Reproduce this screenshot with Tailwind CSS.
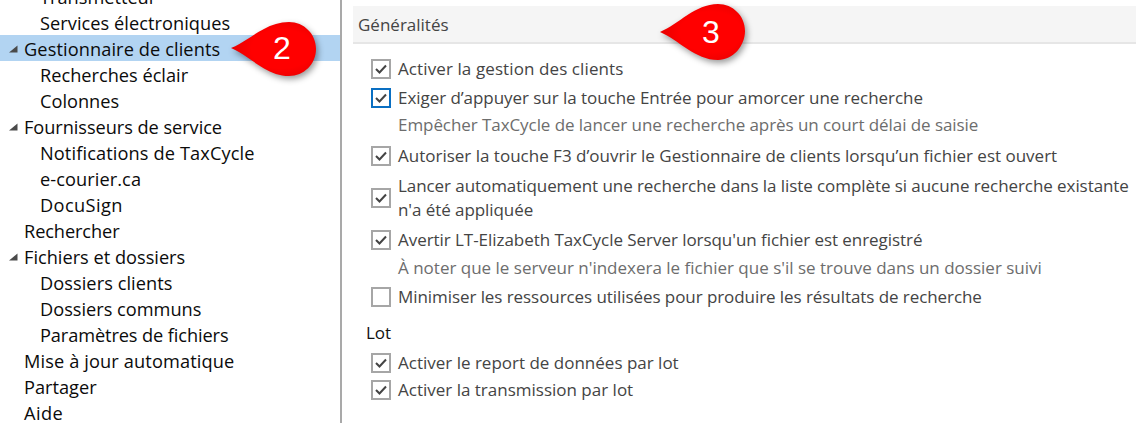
<!DOCTYPE html>
<html lang="fr">
<head>
    <meta charset="UTF-8">
    <title>Options</title>
    <script src="https://cdn.jsdelivr.net/npm/@tailwindcss/browser@4"></script>
</head>
<body class="bg-white">
    <div class="relative flex w-[1136px] h-[423px] overflow-hidden font-['Open_Sans','Noto_Sans',sans-serif] text-[17px] leading-[26px]">
        <!-- Tree -->
        <div class="w-[342px] h-[440px] shrink-0 border-r-2 border-[#a9a9a9] -mt-[17px] text-[#0b0b0b] text-[18.2px]">
            <div class="h-[26px] pl-[40px] pt-[1px]">Transmetteur</div>
            <div class="h-[26px] pl-[40px] pt-[1px] tracking-[0.05px]">Services électroniques</div>
            <div class="h-[26px] pl-[8px] flex items-center bg-[#b2d4f2]">
                <svg class="w-[11px] h-[11px] mr-[5px]" viewBox="0 0 11 11"><path d="M9.5 2.5V9.5H1Z" fill="#4a4a4a"/></svg>
                <span class="pt-[1px] tracking-[0.1px]">Gestionnaire de clients</span>
            </div>
            <div class="h-[26px] pl-[40px] pt-[1px]">Recherches éclair</div>
            <div class="h-[26px] pl-[40px] pt-[1px]">Colonnes</div>
            <div class="h-[26px] pl-[8px] flex items-center">
                <svg class="w-[11px] h-[11px] mr-[5px]" viewBox="0 0 11 11"><path d="M9.5 2.5V9.5H1Z" fill="#4a4a4a"/></svg>
                <span class="pt-[1px] tracking-[-0.05px]">Fournisseurs de service</span>
            </div>
            <div class="h-[26px] pl-[40px] pt-[1px] tracking-[0.12px]">Notifications de TaxCycle</div>
            <div class="h-[26px] pl-[40px] pt-[1px] tracking-[0.08px]">e-courier.ca</div>
            <div class="h-[26px] pl-[40px] pt-[1px] tracking-[0.4px]">DocuSign</div>
            <div class="h-[26px] pl-[24px] pt-[1px] tracking-[-0.1px]">Rechercher</div>
            <div class="h-[26px] pl-[8px] flex items-center">
                <svg class="w-[11px] h-[11px] mr-[5px]" viewBox="0 0 11 11"><path d="M9.5 2.5V9.5H1Z" fill="#4a4a4a"/></svg>
                <span class="pt-[1px]">Fichiers et dossiers</span>
            </div>
            <div class="h-[26px] pl-[40px] pt-[1px] tracking-[0.06px]">Dossiers clients</div>
            <div class="h-[26px] pl-[40px] pt-[1px]">Dossiers communs</div>
            <div class="h-[26px] pl-[40px] pt-[1px] tracking-[-0.1px]">Paramètres de fichiers</div>
            <div class="h-[26px] pl-[24px] pt-[1px] tracking-[0.13px]">Mise à jour automatique</div>
            <div class="h-[26px] pl-[24px] pt-[1px]">Partager</div>
            <div class="h-[26px] pl-[24px] pt-[1px] tracking-[0.4px]">Aide</div>
        </div>

        <!-- Settings -->
        <div class="flex-1 pl-[11px] pt-[6px] text-[#444]">
            <div class="h-[38px] pl-[5px] pt-[1px] flex items-center bg-[#f5f5f5] border-b-2 border-[#e6e6e6] text-[#444]">Généralités</div>

            <div class="pl-[18px] pt-[11px]">
                <label class="flex items-center h-[27px]">
                    <span class="w-[20px] h-[20px] mr-[7px] shrink-0 border-2 border-[#a6a6a6] flex items-center justify-center">
                        <svg class="w-[14px] h-[14px]" viewBox="0 0 14 14"><path d="M2 7L5.5 10.5L12 3.5" fill="none" stroke="#444" stroke-width="2"/></svg>
                    </span>
                    <span class="tracking-[0.1px]">Activer la gestion des clients</span>
                </label>
                <label class="flex items-center h-[31px] pt-[1px]">
                    <span class="w-[20px] h-[20px] mr-[7px] shrink-0 border-2 border-[#0a6fc2] flex items-center justify-center">
                        <svg class="w-[14px] h-[14px]" viewBox="0 0 14 14"><path d="M2 7L5.5 10.5L12 3.5" fill="none" stroke="#444" stroke-width="2"/></svg>
                    </span>
                    <span class="tracking-[-0.05px]">Exiger d’appuyer sur la touche Entrée pour amorcer une recherche</span>
                </label>
                <div class="pl-[27px] h-[26px] -mt-[1px] text-[#6d6d6d] tracking-[-0.07px]">Empêcher TaxCycle de lancer une recherche après un court délai de saisie</div>
                <label class="flex items-center h-[31px] mt-[2px]">
                    <span class="w-[20px] h-[20px] mr-[7px] shrink-0 border-2 border-[#a6a6a6] flex items-center justify-center">
                        <svg class="w-[14px] h-[14px]" viewBox="0 0 14 14"><path d="M2 7L5.5 10.5L12 3.5" fill="none" stroke="#444" stroke-width="2"/></svg>
                    </span>
                    Autoriser la touche F3 d’ouvrir le Gestionnaire de clients lorsqu’un fichier est ouvert
                </label>
                <label class="flex items-center h-[52px] mt-[1px]">
                    <span class="w-[20px] h-[20px] mr-[7px] shrink-0 border-2 border-[#a6a6a6] flex items-center justify-center">
                        <svg class="w-[14px] h-[14px]" viewBox="0 0 14 14"><path d="M2 7L5.5 10.5L12 3.5" fill="none" stroke="#444" stroke-width="2"/></svg>
                    </span>
                    <span class="leading-[24px] tracking-[-0.07px] whitespace-nowrap">Lancer automatiquement une recherche dans la liste complète si aucune recherche existante<br>n'a été appliquée</span>
                </label>
                <label class="flex items-center h-[30px] mt-[1px]">
                    <span class="w-[20px] h-[20px] mr-[7px] shrink-0 border-2 border-[#a6a6a6] flex items-center justify-center">
                        <svg class="w-[14px] h-[14px]" viewBox="0 0 14 14"><path d="M2 7L5.5 10.5L12 3.5" fill="none" stroke="#444" stroke-width="2"/></svg>
                    </span>
                    <span class="tracking-[-0.05px]">Avertir LT-Elizabeth TaxCycle Server lorsqu'un fichier est enregistré</span>
                </label>
                <div class="pl-[27px] h-[26px] text-[#6d6d6d]">À noter que le serveur n'indexera le fichier que s'il se trouve dans un dossier suivi</div>
                <label class="flex items-center h-[31px]">
                    <span class="w-[20px] h-[20px] mr-[7px] shrink-0 border-2 border-[#a6a6a6]"></span>
                    <span class="tracking-[-0.07px]">Minimiser les ressources utilisées pour produire les résultats de recherche</span>
                </label>
            </div>

            <div class="pl-[13px] pt-[8px] h-[37px] text-[#111]">Lot</div>

            <div class="pl-[18px]">
                <label class="flex items-center h-[27px]">
                    <span class="w-[20px] h-[20px] mr-[7px] shrink-0 border-2 border-[#a6a6a6] flex items-center justify-center">
                        <svg class="w-[14px] h-[14px]" viewBox="0 0 14 14"><path d="M2 7L5.5 10.5L12 3.5" fill="none" stroke="#444" stroke-width="2"/></svg>
                    </span>
                    Activer le report de données par lot
                </label>
                <label class="flex items-center h-[27px]">
                    <span class="w-[20px] h-[20px] mr-[7px] shrink-0 border-2 border-[#a6a6a6] flex items-center justify-center">
                        <svg class="w-[14px] h-[14px]" viewBox="0 0 14 14"><path d="M2 7L5.5 10.5L12 3.5" fill="none" stroke="#444" stroke-width="2"/></svg>
                    </span>
                    Activer la transmission par lot
                </label>
            </div>
        </div>

        <!-- Callouts -->
        <div class="absolute left-[228px] top-[19px] w-[94px] h-[62px]">
            <svg class="w-full h-full drop-shadow-[2px_3px_3px_rgba(0,0,0,0.4)]" viewBox="0 0 94 62">
                <defs>
                    <radialGradient id="red2" cx="0.6" cy="0.5" r="0.6">
                        <stop offset="0.6" stop-color="#ff0000"/>
                        <stop offset="1" stop-color="#e80000"/>
                    </radialGradient>
                </defs>
                <path d="M3 29C22 21 38 3 61 3C76 3 88 15 88 30C88 45 76 57 61 57C38 57 22 37 3 29Z" fill="url(#red2)"/>
            </svg>
            <span class="absolute left-[45px] top-[11px] font-['Liberation_Sans',sans-serif] text-[32px] leading-[36px] text-white">2</span>
        </div>
        <div class="absolute left-[657px] top-[1px] w-[94px] h-[62px]">
            <svg class="w-full h-full drop-shadow-[2px_3px_3px_rgba(0,0,0,0.4)]" viewBox="0 0 94 62">
                <defs>
                    <radialGradient id="red3" cx="0.6" cy="0.5" r="0.6">
                        <stop offset="0.6" stop-color="#ff0000"/>
                        <stop offset="1" stop-color="#e80000"/>
                    </radialGradient>
                </defs>
                <path d="M3 31C22 23 38 3 61 3C76 3 88 15 88 30C88 45 76 59 61 59C38 59 22 39 3 31Z" fill="url(#red3)"/>
            </svg>
            <span class="absolute left-[45px] top-[13px] font-['Liberation_Sans',sans-serif] text-[32px] leading-[36px] text-white">3</span>
        </div>
    </div>
</body>
</html>
